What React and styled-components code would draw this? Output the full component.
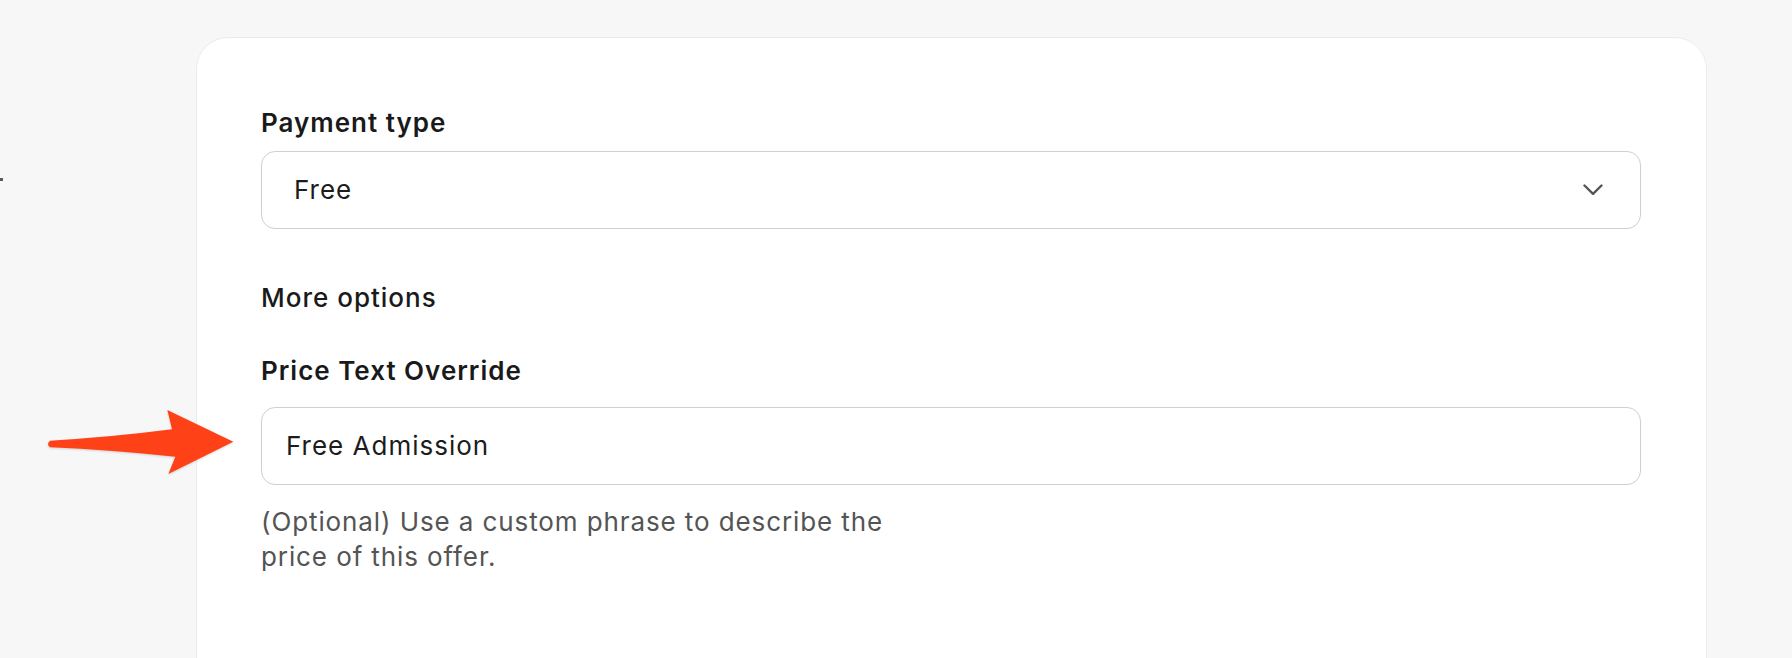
import React from "react";
import styled, { createGlobalStyle } from "styled-components";

const GlobalStyle = createGlobalStyle`
  html, body {
    margin: 0;
    padding: 0;
    background: #f7f7f7;
    font-family: Inter, "Noto Sans", "Liberation Sans", sans-serif;
    -webkit-font-smoothing: antialiased;
  }
`;

const Page = styled.div`
  position: relative;
  height: 658px;
  overflow: hidden;
  padding: 37px 0 0 196px;
  box-sizing: border-box;
`;

const Card = styled.div`
  width: 1511px;
  min-height: 700px;
  box-sizing: border-box;
  background: #ffffff;
  border: 1px solid #ebebeb;
  border-radius: 32px;
  padding: 70px 65px 0 64px;
  display: flex;
  flex-direction: column;
`;

const Label = styled.div`
  font-size: 26px;
  line-height: 30px;
  letter-spacing: 1px;
  font-weight: ${({ weight }) => weight || 600};
  color: #1a1a1a;
  margin-top: ${({ top }) => top || 0}px;
  margin-bottom: ${({ bottom }) => bottom || 0}px;
`;

const Box = styled.div`
  height: 78px;
  box-sizing: border-box;
  border: 1px solid #cfcfcf;
  border-radius: 14px;
  background: #fff;
  display: flex;
  align-items: center;
  justify-content: space-between;
  padding: 0 37px 0 ${({ inset }) => inset}px;
  font-size: 26px;
  line-height: 30px;
  letter-spacing: 1px;
  color: #1c1c1c;
`;

const Chevron = styled.svg`
  width: 20px;
  height: 12px;
  flex-shrink: 0;
`;

const Help = styled.p`
  margin: 20px 0 0;
  max-width: 660px;
  font-size: 26px;
  line-height: 34.5px;
  letter-spacing: 0.9px;
  color: #545454;
`;

const Arrow = styled.svg`
  position: absolute;
  left: 40px;
  top: 400px;
  width: 200px;
  height: 90px;
  filter: drop-shadow(0 1px 1px rgba(0, 0, 0, 0.15));
`;

const Crumb = styled.span`
  position: absolute;
  left: 0;
  top: 178px;
  width: 3px;
  height: 3px;
  background: #5a5a5a;
`;

export default function App() {
  return (
    <>
      <GlobalStyle />
      <Page>
        <Crumb />
        <Card>
          <Label bottom={13}>Payment type</Label>
          <Box inset={32}>
            <span>Free</span>
            <Chevron viewBox="0 0 20 12">
              <path
                d="M1.5 1.5 L10 9.8 L18.5 1.5"
                fill="none"
                stroke="#555"
                strokeWidth="2.4"
                strokeLinecap="round"
                strokeLinejoin="round"
              />
            </Chevron>
          </Box>
          <Label weight={500} top={54}>More options</Label>
          <Label top={43} bottom={21}>Price Text Override</Label>
          <Box inset={24}>
            <span>Free Admission</span>
          </Box>
          <Help>(Optional) Use a custom phrase to describe the price of this offer.</Help>
        </Card>
        <Arrow viewBox="0 0 600 270">
          <path
            d="M30 122 Q210 112 396 88 L382 30 L580 125 L385 222 L406 170 Q210 150 30 142 Q18 132 30 122 Z"
            fill="#ff4118"
          />
        </Arrow>
      </Page>
    </>
  );
}
